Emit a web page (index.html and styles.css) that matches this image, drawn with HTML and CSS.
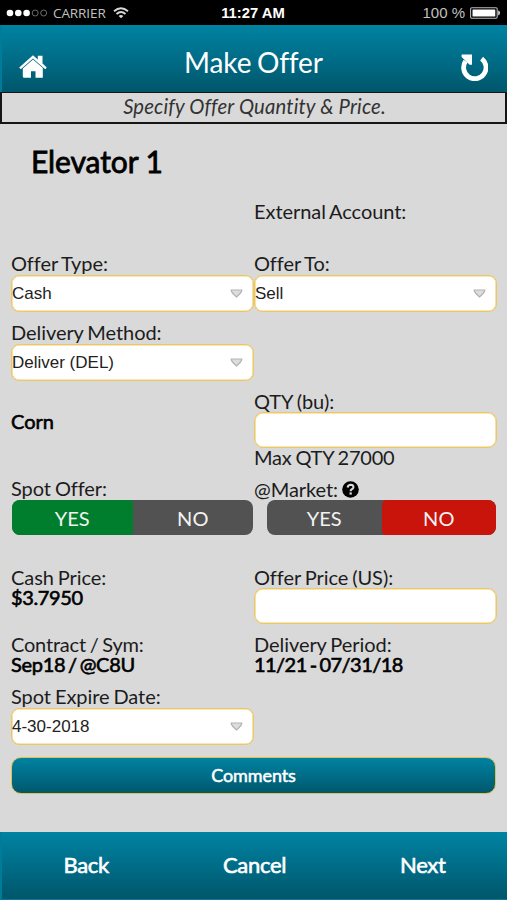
FILE: index.html
```html
<!DOCTYPE html>
<html lang="en">
<head>
<meta charset="utf-8">
<title>Make Offer</title>
<link rel="stylesheet" href="styles.css">
</head>
<body>
<div class="status">
  <div class="status-left">
    <svg class="signal" width="42" height="10" viewBox="0 0 42 10"><g fill="#fff"><circle cx="4" cy="5" r="3.3"/><circle cx="12.3" cy="5" r="3.3"/><circle cx="20.6" cy="5" r="3.3"/></g><g fill="none" stroke="#777" stroke-width=".9"><circle cx="29.2" cy="5" r="3"/><circle cx="37.7" cy="5" r="3"/></g></svg>
    <span class="carrier">CARRIER</span>
    <svg class="wifi" width="16" height="12" viewBox="0 0 16 12"><g fill="none" stroke="#d8d8d8" stroke-width="1.9"><path d="M1 4.3Q8-1.8 15 4.3"/><path d="M3.5 7Q8 3.2 12.5 7"/></g><path d="M5.6 9Q8 7 10.4 9L8 11.3z" fill="#d8d8d8"/></svg>
  </div>
  <span class="time">11:27 AM</span>
  <div class="status-right">
    <span class="percent">100 %</span>
    <svg width="31" height="12" viewBox="0 0 31 12"><rect x=".6" y=".8" width="26.6" height="10.4" rx="1.2" fill="none" stroke="#bbb" stroke-width="1.1"/><rect x="2.5" y="2.6" width="22.8" height="6.8" rx=".5" fill="#fff"/><path d="M28.2 3.6q1.8.4 1.8 2.4t-1.8 2.4z" fill="#ddd"/></svg>
  </div>
</div>
<header class="header">
  <svg class="home" width="28" height="24" viewBox="0 0 28 24" fill="#fff"><path d="M14 .3L18.8 4.6V.8H23.5V8.6L27.8 12.4L26.2 14.2L14 3.6L1.8 14.2L.2 12.4z"/><path d="M14 4.6L23.8 13.1V22.7H16.5V16.2H12V22.7H5.2Q3.8 22.7 3.8 21.2V13.4z"/></svg>
  <h1 class="title">Make Offer</h1>
  <svg class="reload" width="28" height="28" viewBox="0 0 28 28"><path d="M5.6 8.2A11.2 11.2 0 1 0 21.6 5.6" fill="none" stroke="#fff" stroke-width="4.8"/><path d="M1.6 1.5H12V11.8H9.6L1.6 4z" fill="#fff"/></svg>
</header>
<div class="hint">Specify Offer Quantity &amp; Price.</div>
<main class="main">
  <h2 class="place">Elevator 1</h2>
  <div class="row account"><div></div><div class="label">External Account:</div></div>
  <div class="row types">
    <div><div class="label">Offer Type:</div><div class="field">Cash<svg class="caret" viewBox="0 0 13 9"><path d="M1.2 1H11.8Q12 3.2 6.5 8Q1 3.2 1.2 1z"/></svg></div></div>
    <div><div class="label">Offer To:</div><div class="field">Sell<svg class="caret" viewBox="0 0 13 9"><path d="M1.2 1H11.8Q12 3.2 6.5 8Q1 3.2 1.2 1z"/></svg></div></div>
  </div>
  <div class="row method">
    <div><div class="label">Delivery Method:</div><div class="field">Deliver (DEL)<svg class="caret" viewBox="0 0 13 9"><path d="M1.2 1H11.8Q12 3.2 6.5 8Q1 3.2 1.2 1z"/></svg></div></div>
  </div>
  <div class="row quantity">
    <div class="strong crop">Corn</div>
    <div><div class="label">QTY (bu):</div><div class="field input"></div><div class="label limit">Max QTY 27000</div></div>
  </div>
  <div class="row switches">
    <div><div class="label">Spot Offer:</div><div class="toggle"><span class="yes">YES</span><span>NO</span></div></div>
    <div><div class="label market">@Market: <svg width="17" height="17" viewBox="0 0 17 17"><circle cx="8.5" cy="8.5" r="8.3"/><path d="M5.6 6.5Q6 3.7 8.7 3.7Q11.5 3.8 11.4 6.2Q11.3 7.6 9.8 8.3Q8.6 8.9 8.6 10.3" fill="none" stroke="#d9d9d9" stroke-width="2.1"/><rect x="7.5" y="11.4" width="2.3" height="2.2" fill="#d9d9d9"/></svg></div><div class="toggle narrow"><span>YES</span><span class="no">NO</span></div></div>
  </div>
  <div class="row price">
    <div><div class="label">Cash Price:</div><div class="strong amount">$3.7950</div></div>
    <div><div class="label">Offer Price (US):</div><div class="field input"></div></div>
  </div>
  <div class="row contract">
    <div><div class="label slashed">Contract / Sym:</div><div class="strong symbol">Sep18 / @C8U</div></div>
    <div><div class="label">Delivery Period:</div><div class="strong period">11/21 - 07/31/18</div></div>
  </div>
  <div class="row expire">
    <div><div class="label">Spot Expire Date:</div><div class="field">4-30-2018<svg class="caret" viewBox="0 0 13 9"><path d="M1.2 1H11.8Q12 3.2 6.5 8Q1 3.2 1.2 1z"/></svg></div></div>
  </div>
  <div class="comments">Comments</div>
</main>
<footer class="footer"><span>Back</span><span>Cancel</span><span>Next</span></footer>
</body>
</html>
```
FILE: styles.css
```css
* { box-sizing: border-box; }
body {
  margin: 0;
  width: 507px;
  height: 900px;
  display: flex;
  flex-direction: column;
  overflow: hidden;
  background: #d9d9d9;
  color: #1c1c1c;
  font: 20px/20px Lato, sans-serif;
  font-variant-ligatures: none;
}
h1, h2 { margin: 0; font-weight: 400; }
svg { display: block; flex: none; }

.status {
  height: 25px;
  display: grid;
  grid-template-columns: 1fr auto 1fr;
  align-items: center;
  padding: 1px 6px 0 5px;
  background: #000;
  color: #fff;
  line-height: 20px;
}
.status-left, .status-right { display: flex; align-items: center; }
.status-right { justify-content: flex-end; gap: 5px; }
.signal { margin: 0 5px 0 1px; }
.carrier { font-family: "Open Sans", sans-serif; font-size: 13.5px; color: #c0c0c0; letter-spacing: -0.1px; }
.wifi { margin-left: 7px; }
.time { font: bold 14.8px/20px "Liberation Sans", sans-serif; }
.percent { font: 15px/20px "Liberation Sans", sans-serif; color: #c0c0c0; }

.header, .footer, .comments {
  background: linear-gradient(#0083a2, #006d88 50%, #00566a);
  color: #fff;
}
.header {
  height: 67px;
  display: flex;
  justify-content: space-between;
  align-items: center;
  padding: 7px 19px 0 17px;
  border-left: 2px solid #007c9b;
}
.home { margin-top: 10px; }
.reload { margin-top: 9px; }
.title { font-size: 28px; line-height: 34px; letter-spacing: -0.1px; word-spacing: -1.5px; }

.hint {
  height: 32px;
  border: 2px solid #161616;
  border-top-width: 1px;
  line-height: 27px;
  text-align: center;
  font-style: italic;
  font-size: 20.3px;
  letter-spacing: 0.16px;
  color: #333;
  padding-left: 2px;
}

.main { padding: 0 11px; flex: 1; }
.place { height: 78px; padding: 20px 0 0 20px; font-size: 30px; line-height: 34px; color: #000; -webkit-text-stroke: 0.8px #000; letter-spacing: -0.1px; }
.row { display: grid; grid-template-columns: 243px 243px; }
.label { height: 21px; line-height: 18px; white-space: nowrap; word-spacing: -1.1px; letter-spacing: -0.06px; }
.strong { line-height: 17px; color: #000; -webkit-text-stroke: 0.6px #000; white-space: nowrap; }
.account { height: 52px; }
.types, .method { height: 69px; }
.quantity { height: 87px; }
.limit { line-height: 18px; letter-spacing: -0.2px; }
.crop { padding-top: 21px; }
.switches { height: 89px; }
.amount { letter-spacing: -0.35px; }
.slashed { letter-spacing: -0.2px; }
.symbol { letter-spacing: -0.3px; word-spacing: -2px; }
.period { letter-spacing: -0.55px; word-spacing: -1.6px; }
.price { height: 67px; }
.contract { height: 52px; }
.expire { height: 70px; }

.field {
  height: 37px;
  display: flex;
  align-items: center;
  justify-content: space-between;
  padding: 0 10px 0 0;
  border: 1px solid #ecc765;
  box-shadow: inset 0 0 0 0.6px #f0cd72;
  border-radius: 8px;
  background: #fff;
  font: 17px/20px "Liberation Sans", sans-serif;
  color: #222;
}
.input { height: 36px; margin-top: -1px; border-radius: 9px; }
.caret { width: 13px; height: 9px; fill: #ddd; stroke: #b3b3b3; stroke-width: 1.2; }

.toggle {
  height: 35px;
  margin: 0 1px;
  display: grid;
  grid-template-columns: 1fr 1fr;
  border-radius: 8px;
  overflow: hidden;
  background: #525252;
  color: #f2f2f2;
  line-height: 36px;
  text-align: center;
}
.narrow { margin-left: 13px; }
.yes { background: #007e2d; border-radius: 0 4px 4px 0; }
.no { background: #c8140b; border-radius: 5px 0 0 5px; }
.market { display: flex; align-items: center; gap: 4px; padding-bottom: 1px; }

.comments {
  height: 37px;
  border: 1px solid #e0c14e;
  background-origin: border-box;
  border-radius: 10px;
  text-align: center;
  font-size: 18px;
  line-height: 35px;
  letter-spacing: -0.1px;
  -webkit-text-stroke: 0.5px #fff;
}
.footer {
  height: 68px;
  display: grid;
  grid-template-columns: repeat(3, 1fr);
  align-items: center;
  text-align: center;
  padding-bottom: 2px;
  font-size: 22px;
  line-height: 28px;
  letter-spacing: -0.3px;
  border-left: 2px solid #007c9b;
  border-bottom: 1px solid #007c9b;
  -webkit-text-stroke: 0.6px #fff;
}
```
